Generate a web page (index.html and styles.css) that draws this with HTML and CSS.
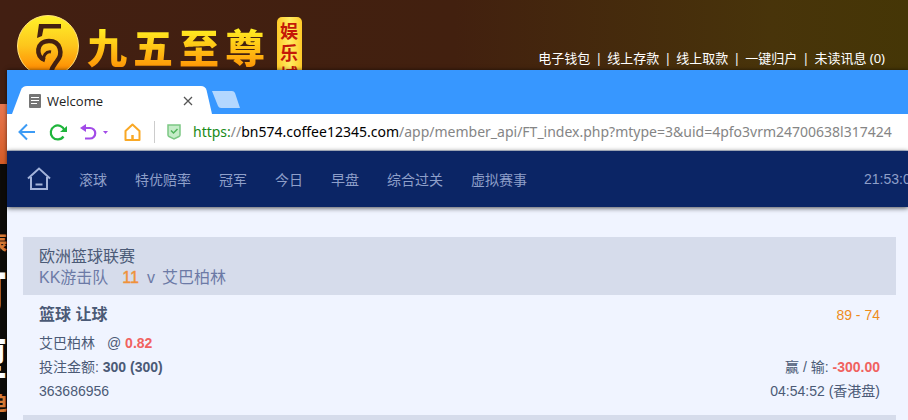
FILE: index.html
```html
<!DOCTYPE html>
<html lang="zh-CN">
<head>
<meta charset="UTF-8">
<meta name="viewport" content="width=device-width, initial-scale=1.0">
<title>Welcome</title>
<link rel="stylesheet" href="styles.css">
</head>
<body>

<div class="site">
  <header class="site-header">
    <div class="brand">
      <svg class="emblem" viewBox="0 0 62 62" aria-hidden="true">
        <defs>
          <linearGradient id="gold" x1="0" y1="0" x2="0" y2="1">
            <stop offset="0" stop-color="#fff32a"/>
            <stop offset="0.5" stop-color="#fdc51c"/>
            <stop offset="0.85" stop-color="#ff9205"/>
          </linearGradient>
        </defs>
        <circle cx="31" cy="31" r="30.5" fill="url(#gold)" stroke="#ffe27a"/>
        <path d="M22 9H44V13.500H26.500L25 21L20 23Z" fill="#432012"/>
        <path d="M28 45C18 42 19 26 32 26C44 26 46 39 40 46C37 50 35 52 34 57" fill="none" stroke="#432012" stroke-width="4.500"/>
        <path d="M26 46C26 41 29 36 34 37" fill="none" stroke="#432012" stroke-width="3"/>
      </svg>
      <div class="brand-name"><span>九</span><span>五</span><span>至</span><span>尊</span></div>
      <div class="brand-tag">娱乐城</div>
    </div>
    <nav class="account-links">
      <a href="#">电子钱包</a>
      <a href="#">线上存款</a>
      <a href="#">线上取款</a>
      <a href="#">一键归户</a>
      <a href="#">未读讯息 (0)</a>
    </nav>
  </header>
  <div class="banner"></div>
  <div class="poster">
    <span class="poster-small">辰</span>
    <span class="poster-big">可</span>
    <span class="poster-big">堕</span>
    <span class="poster-small">迫</span>
  </div>
</div>

<div class="window">
  <div class="tab-bar">
    <div class="tab">
      <svg class="tab-shape" viewBox="0 0 200 28" preserveAspectRatio="none" aria-hidden="true">
        <path d="M0 28L9 4Q10.500 0 15 0H189Q193 0 194.500 4L200 28Z" fill="#fff"/>
      </svg>
      <svg class="tab-icon" viewBox="0 0 12 14" aria-hidden="true">
        <rect width="12" height="14" rx="1" fill="#757575"/>
        <path d="M2 3.500H10M2 6.500H10M2 9.500H8" stroke="#fff"/>
      </svg>
      <span class="tab-title">Welcome</span>
      <button class="tab-close" aria-label="Close tab">
        <svg viewBox="0 0 10 10"><path d="M1 1L9 9M9 1L1 9" stroke="#555" stroke-width="1.300"/></svg>
      </button>
    </div>
    <button class="new-tab" aria-label="New tab">
      <svg viewBox="0 0 28 17"><path d="M2 0H20Q22 0 23 2L28 17H9Q7 17 6 15L0 0Z" fill="#b3d7ff"/></svg>
    </button>
  </div>

  <div class="toolbar">
    <button class="tool" aria-label="Back">
      <svg viewBox="0 0 18 18"><path d="M17 9H2M9 1.500L1.500 9L9 16.500" fill="none" stroke="#3c9bf5" stroke-width="2"/></svg>
    </button>
    <button class="tool" aria-label="Reload">
      <svg viewBox="0 0 18 18"><path d="M14.500 13.500A7 7 0 1 1 15.500 7.500" fill="none" stroke="#1fb53c" stroke-width="2.200"/><path d="M11 9H18V3Z" fill="#1fb53c"/></svg>
    </button>
    <button class="tool tool-undo" aria-label="Undo">
      <svg viewBox="0 0 30 18"><path d="M3 5H10A5 5 0 0 1 10 15.500H5" fill="none" stroke="#a24be8" stroke-width="2.200"/><path d="M0 5L6 1V9Z" fill="#a24be8"/><path d="M23 8H28L25.500 11Z" fill="#a24be8"/></svg>
    </button>
    <button class="tool" aria-label="Home">
      <svg viewBox="0 0 18 18"><path d="M2.500 17V8L9.500 1.500L16.500 8V17Z" fill="none" stroke="#f9a825" stroke-width="2" stroke-linejoin="round"/><path d="M9.500 12V17" stroke="#f9a825" stroke-width="2.500"/></svg>
    </button>
    <div class="address">
      <svg class="shield" viewBox="0 0 14 16" aria-hidden="true"><path d="M1 1H13V11Q13 12 12 12.500L7 15L2 12.500Q1 12 1 11Z" fill="#c5ecc8" stroke="#7cc884" stroke-width="1.500"/><path d="M4 6.500L6.500 9L10.500 5" fill="none" stroke="#4fb35a" stroke-width="1.500"/></svg>
      <div class="url" role="textbox" aria-label="Address" contenteditable="true" spellcheck="false"><span class="url-scheme">https:</span>//<span class="url-host">bn574.coffee12345.com</span>/app/member_api/FT_index.php?mtype=3&amp;uid=4pfo3vrm24700638l317424</div>
    </div>
  </div>

  <nav class="main-nav">
    <a class="nav-home" href="#" aria-label="Home">
      <svg viewBox="0 0 24 24"><path d="M1 11.500L12 1.500L23 11.500M4 10V22H20V10M8.500 17.500H15.500" fill="none" stroke="#a3b3da" stroke-width="2"/></svg>
    </a>
    <a href="#">滚球</a>
    <a href="#">特优赔率</a>
    <a href="#">冠军</a>
    <a href="#">今日</a>
    <a href="#">早盘</a>
    <a href="#">综合过关</a>
    <a href="#">虚拟赛事</a>
    <span class="clock">21:53:0</span>
  </nav>

  <main class="bets">
    <section class="bet">
      <div class="bet-header">
        <div class="league">欧洲篮球联赛</div>
        <div class="teams"><span>KK游击队</span><span class="handicap">11</span><span class="versus">v</span><span>艾巴柏林</span></div>
      </div>
      <div class="bet-body">
        <div class="row row-title"><strong>篮球 让球</strong><span class="score">89 - 74</span></div>
        <div class="row"><span class="pick">艾巴柏林<span class="odds">@ <b class="red">0.82</b></span></span></div>
        <div class="row"><span>投注金额: <b>300 (300)</b></span><span>赢 / 输: <b class="red">-300.00</b></span></div>
        <div class="row"><span>363686956</span><span>04:54:52 (香港盘)</span></div>
      </div>
    </section>
    <section class="bet">
      <div class="bet-header"></div>
    </section>
  </main>
</div>

</body>
</html>
```
FILE: styles.css
```css
* {
  box-sizing: border-box;
}
body {
  margin: 0;
  height: 100vh;
  overflow: hidden;
  position: relative;
  font-family: "Liberation Sans", "Noto Sans CJK SC", sans-serif;
  font-size: 14px;
}
a {
  color: inherit;
  text-decoration: none;
}
button {
  padding: 0;
  border: none;
  background: none;
  cursor: pointer;
}
svg {
  display: block;
}

/* page behind the window */
.site {
  height: 100%;
  display: flex;
  flex-direction: column;
  background-color: #0d0b09;
  overflow: hidden;
}
.site-header {
  flex: none;
  height: 104px;
  display: flex;
  justify-content: space-between;
  align-items: flex-start;
  padding: 15px 23px 0 17px;
  background: linear-gradient(to right, #421f12 0%, #42200f 50%, #48340a 85%, #453606 100%);
}
.brand {
  display: flex;
  align-items: flex-start;
}
.emblem {
  width: 62px;
  height: 62px;
}
.brand-name {
  display: flex;
  gap: 6px;
  margin: 2px 12px 0 8px;
  font-family: "Noto Sans CJK SC", sans-serif;
  font-size: 40px;
  font-weight: 900;
  line-height: 58px;
}
.brand-name span {
  background: linear-gradient(to bottom, #ffee22 20%, #ff9908 85%);
  -webkit-background-clip: text;
  background-clip: text;
  color: transparent;
}
.brand-tag {
  width: 25px;
  height: 76px;
  margin-top: 2px;
  padding: 2px 3px;
  border-radius: 5px;
  background: linear-gradient(to right, #ffc928, #ffec62, #ffc928);
  color: #c41808;
  font-family: "Noto Sans CJK SC", sans-serif;
  font-size: 18px;
  font-weight: bold;
  line-height: 22px;
}
.account-links {
  display: flex;
  margin-top: 33px;
  color: #fff;
  font-family: "Noto Sans", "Noto Sans CJK SC", sans-serif;
  font-size: 13px;
  line-height: 20px;
}
.account-links a + a::before {
  content: "|";
  display: inline-block;
  width: 17px;
  text-align: center;
}
.banner {
  flex: none;
  height: 60px;
  background: linear-gradient(to bottom, #e87850, #d65c26);
}
.poster {
  display: flex;
  flex-direction: column;
  align-items: flex-start;
  padding-top: 64px;
  font-family: "Noto Sans CJK SC", sans-serif;
  font-weight: 900;
}
.poster span {
  width: 7px;
  display: flex;
  justify-content: flex-end;
}
.poster-small {
  color: #d97a35;
  font-size: 18px;
  line-height: 28px;
}
.poster-big {
  color: #fff;
  font-size: 44px;
  line-height: 66px;
}

/* browser window */
.window {
  position: absolute;
  top: 70px;
  left: 7px;
  right: 0;
  bottom: 0;
  overflow: hidden;
  background-color: #f0f4ff;
  box-shadow: 0 0 4px rgba(0, 0, 0, 0.6);
}
.tab-bar {
  height: 44px;
  display: flex;
  align-items: flex-end;
  padding-left: 5px;
  background-color: #3797ff;
}
.tab {
  position: relative;
  display: flex;
  align-items: center;
  width: 200px;
  height: 28px;
  padding: 2px 19px 0 17px;
}
.tab-shape {
  position: absolute;
  top: 0;
  left: 0;
  width: 100%;
  height: 100%;
}
.tab-icon {
  position: relative;
  width: 12px;
  height: 14px;
}
.tab-title {
  position: relative;
  flex: 1;
  margin-left: 6px;
  color: #222;
  font-family: "Open Sans", sans-serif;
  font-size: 13px;
}
.tab-close {
  position: relative;
}
.tab-close svg {
  width: 10px;
  height: 10px;
}
.new-tab {
  margin-bottom: 6px;
}
.new-tab svg {
  width: 28px;
  height: 17px;
}
.toolbar {
  height: 37px;
  display: flex;
  align-items: center;
  gap: 13px;
  padding-left: 11px;
  background-color: #fff;
  border-bottom: 1px solid #c3cde0;
}
.tool {
  flex: none;
}
.tool svg {
  width: 18px;
  height: 18px;
}
.tool-undo svg {
  width: 30px;
}
.address {
  flex: 1;
  min-width: 0;
  display: flex;
  align-items: center;
  gap: 12px;
  height: 22px;
  padding-left: 12px;
  border-left: 1px solid #ccc;
}
.shield {
  flex: none;
  width: 14px;
  height: 16px;
}
.url {
  flex: 1;
  overflow: hidden;
  white-space: nowrap;
  color: #858585;
  font-family: "Noto Sans", sans-serif;
  font-size: 14px;
  line-height: 22px;
}
.url-scheme {
  color: #188a18;
}
.url-host {
  color: #000;
}

.main-nav {
  position: relative;
  display: flex;
  align-items: center;
  gap: 28px;
  height: 56px;
  padding-left: 20px;
  background-color: #0b2565;
  box-shadow: 0 1px 5px rgba(0, 0, 0, 0.7);
  color: #8e9fc9;
  white-space: nowrap;
}
.nav-home svg {
  width: 24px;
  height: 24px;
}
.clock {
  flex: 0 0 44px;
  min-width: 0;
  margin-left: auto;
}

.bets {
  padding: 30px 12px 0 16px;
}
.bet-header {
  min-height: 58px;
  padding: 9px 16px 7px;
  background-color: #d6dceb;
  font-size: 16px;
  line-height: 21px;
}
.league {
  color: #4b5a76;
}
.teams {
  display: flex;
  color: #6c7aa6;
}
.handicap {
  margin: 0 8px 0 14px;
  color: #f0913a;
  -webkit-text-stroke: 0.4px;
}
.versus {
  margin-right: 7px;
}
.bet-body {
  padding: 8px 16px 12px;
  color: #4b5a76;
  line-height: 24px;
}
.row {
  display: flex;
  justify-content: space-between;
}
.row-title {
  margin-bottom: 4px;
}
.row-title strong {
  font-size: 16px;
}
.score {
  color: #ee8c1c;
}
.odds {
  margin-left: 12px;
}
.red {
  color: #f0625f;
}
```
